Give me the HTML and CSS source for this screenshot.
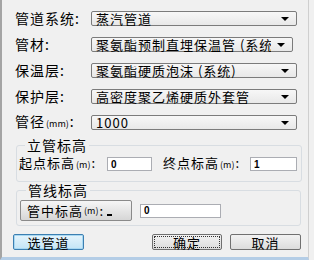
FILE: index.html
```html
<!DOCTYPE html>
<html lang="zh-CN">

<head>
    <meta charset="UTF-8">
    <title>管道标高</title>
    <link rel="stylesheet" href="styles.css">
</head>

<body>
    <div class="dialog">
        <div class="fields">
            <div class="field-row">
                <span class="label">管道系统:</span>
                <div class="combo"><span class="combo-text">蒸汽管道</span><span class="arrow"></span></div>
            </div>
            <div class="field-row">
                <span class="label">管材:</span>
                <div class="combo narrow"><span class="combo-text">聚氨酯预制直埋保温管 (系统)</span><span class="arrow"></span></div>
            </div>
            <div class="field-row">
                <span class="label">保温层:</span>
                <div class="combo"><span class="combo-text">聚氨酯硬质泡沫 (系统)</span><span class="arrow"></span></div>
            </div>
            <div class="field-row">
                <span class="label">保护层:</span>
                <div class="combo"><span class="combo-text">高密度聚乙烯硬质外套管</span><span class="arrow"></span></div>
            </div>
            <div class="field-row">
                <span class="label">管径<small>(mm)</small>:</span>
                <div class="combo"><span class="combo-text">1000</span><span class="arrow"></span></div>
            </div>
        </div>

        <fieldset class="group riser">
            <legend>立管标高</legend>
            <div class="group-row">
                <span class="sub-label start">起点标高<small>(m)</small>:</span>
                <input class="text-input short" type="text" value="0">
                <span class="sub-label end">终点标高<small>(m)</small>:</span>
                <input class="text-input short end-input" type="text" value="1">
            </div>
        </fieldset>

        <fieldset class="group line">
            <legend>管线标高</legend>
            <div class="group-row">
                <button class="drop-button">管中标高<small>(m)</small>: <span class="mini-arrow"></span></button>
                <input class="text-input long" type="text" value="0">
            </div>
        </fieldset>

        <div class="actions">
            <button class="btn pick">选管道</button>
            <button class="btn ok"><span class="focus">确定</span></button>
            <button class="btn cancel">取消</button>
        </div>
    </div>
</body>

</html>
```

FILE: styles.css
```css
body {
    margin: 0;
    background-color: #f0f0f0;
    font-family: "Noto Sans CJK SC", "Noto Sans", sans-serif;
    color: #000;
}

.dialog {
    box-sizing: border-box;
    width: 309px;
    height: 260px;
    padding: 11px 0 0 13px;
    border-left: 2px solid #a4a4a4;
    border-right: 1px solid #cfcfcf;
    border-bottom: 3px solid #b4cde6;
    background-color: #f0f0f0;
}

.fields {
    display: flex;
    flex-direction: column;
    gap: 11px;
}

.field-row {
    display: flex;
    align-items: center;
    height: 15px;
}

.label {
    width: 76px;
    font-size: 14px;
    letter-spacing: 1px;
    line-height: 15px;
    white-space: nowrap;
}

.label small,
.sub-label small,
.drop-button small {
    font-size: 9px;
    letter-spacing: 0;
    margin: 0 1px;
}

.combo {
    box-sizing: border-box;
    display: flex;
    align-items: center;
    width: 206px;
    height: 15px;
    padding: 0 7px 0 4px;
    border: 1px solid #7b7b7b;
    border-radius: 2px;
    background: linear-gradient(#f7f7f7, #e8e8e8);
}

.combo.narrow {
    width: 202px;
}

.combo-text {
    flex: 1;
    min-width: 0;
    height: 17px;
    overflow: hidden;
    white-space: nowrap;
    font-size: 13px;
    letter-spacing: 1px;
    line-height: 17px;
    margin-right: 6px;
}

.arrow {
    flex: none;
    width: 0;
    height: 0;
    border-left: 4px solid transparent;
    border-right: 4px solid transparent;
    border-top: 4px solid #000;
}

.group {
    margin: 7px 0 0 1px;
    width: 285px;
    box-sizing: border-box;
    border: 1px solid #d8dde2;
    border-radius: 3px;
    padding: 3px 4px 9px 2px;
}

.group legend {
    margin-left: 6px;
    padding: 0 2px;
    font-size: 14px;
    line-height: 16px;
    letter-spacing: 1px;
}

.group.line {
    margin-top: 0;
    padding: 2px 4px 4px 3px;
}

.group-row {
    display: flex;
    align-items: center;
}

.sub-label {
    font-size: 13px;
    letter-spacing: 1px;
    line-height: 14px;
    white-space: nowrap;
}

.sub-label.start {
    width: 88px;
}

.sub-label.end {
    width: 87px;
    margin-left: 11px;
}

.text-input {
    box-sizing: border-box;
    height: 14px;
    padding: 0 3px;
    border: 1px solid #abadb3;
    background-color: #fff;
    font-family: "Liberation Sans", sans-serif;
    font-size: 10px;
    font-weight: bold;
}

.text-input.short {
    width: 45px;
}

.text-input.end-input {
    width: 47px;
}

.text-input.long {
    width: 81px;
    margin-left: 8px;
}

.drop-button {
    box-sizing: border-box;
    display: flex;
    align-items: center;
    width: 112px;
    height: 21px;
    padding: 0 0 0 6px;
    border: 1px solid #8a8a8a;
    border-radius: 2px;
    background: linear-gradient(#f6f6f6, #d6d6d6);
    font-family: inherit;
    font-size: 13px;
    letter-spacing: 1px;
    white-space: nowrap;
}

.mini-arrow {
    display: inline-block;
    width: 5px;
    height: 2px;
    margin: 8px 0 0 3px;
    background-color: #000;
}

.actions {
    display: flex;
    margin: 8px 0 0 -2px;
}

.btn {
    box-sizing: border-box;
    height: 16px;
    padding: 0;
    border: 1px solid #707070;
    border-radius: 2px;
    background: linear-gradient(#f2f2f2, #dcdcdc);
    font-family: inherit;
    font-size: 13px;
    line-height: 13px;
    letter-spacing: 1px;
}

.btn.pick {
    width: 71px;
    border-color: #3c7fb1;
    background: linear-gradient(#e5f4fc, #c4e5f6);
    box-shadow: inset 0 0 0 1px #a8d8f2;
}

.btn.ok {
    width: 70px;
    margin-left: 68px;
    padding: 1px;
}

.btn.ok .focus {
    display: block;
    height: 100%;
    box-sizing: border-box;
    border: 1px dotted #333;
    line-height: 11px;
}

.btn.cancel {
    width: 71px;
    margin-left: 8px;
}
```
